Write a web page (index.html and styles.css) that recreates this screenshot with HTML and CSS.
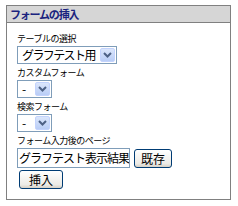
FILE: index.html
```html
<!DOCTYPE html>
<html lang="ja">
<head>
    <meta charset="UTF-8">
    <title>フォームの挿入</title>
    <link rel="stylesheet" href="styles.css">
</head>
<body>
    <div class="panel">
        <!-- Panel title -->
        <div class="panel-title">フォームの挿入</div>

        <div class="panel-body">
            <div class="field-label">テーブルの選択</div>
            <div class="select select-wide">
                <span class="select-value">グラフテスト用</span>
                <span class="select-arrow">
                    <svg width="9" height="6" viewBox="0 0 9 6"><path d="M1 1 L4.5 4.5 L8 1" fill="none" stroke="#4d6185" stroke-width="2"/></svg>
                </span>
            </div>

            <div class="field-label">カスタムフォーム</div>
            <div class="select">
                <span class="select-value">-</span>
                <span class="select-arrow">
                    <svg width="9" height="6" viewBox="0 0 9 6"><path d="M1 1 L4.5 4.5 L8 1" fill="none" stroke="#4d6185" stroke-width="2"/></svg>
                </span>
            </div>

            <div class="field-label">検索フォーム</div>
            <div class="select">
                <span class="select-value">-</span>
                <span class="select-arrow">
                    <svg width="9" height="6" viewBox="0 0 9 6"><path d="M1 1 L4.5 4.5 L8 1" fill="none" stroke="#4d6185" stroke-width="2"/></svg>
                </span>
            </div>

            <div class="field-label">フォーム入力後のページ</div>
            <div class="input-row">
                <div class="text-input">グラフテスト表示結果</div>
                <button class="btn btn-exist">既存</button>
            </div>
            <button class="btn btn-insert">挿入</button>
        </div>
    </div>
</body>
</html>
```

FILE: styles.css
```css
body {
    margin: 0;
    background: #ffffff;
    font-family: "Noto Sans CJK JP", "DejaVu Sans", sans-serif;
    color: #000000;
}

/* Outer panel */
.panel {
    margin: 5px 0 0 6px;
    width: 223px;
    height: 193px;
    border: 1px solid #808080;
}

.panel-title {
    height: 16px;
    line-height: 17px;
    background: #d6d6d6;
    border-bottom: 1px solid #808080;
    padding-left: 3px;
    font-size: 11px;
    font-weight: bold;
    letter-spacing: -1.2px;
    color: #1a237e;
}

.panel-body {
    padding: 10px 0 0 10px;
}

.field-label {
    font-size: 9px;
    line-height: 12px;
    height: 12px;
    letter-spacing: -0.5px;
    white-space: nowrap;
}

/* Fake XP style dropdown */
.select {
    display: flex;
    align-items: center;
    width: 35px;
    height: 18px;
    box-sizing: border-box;
    border: 1px solid #7f9db9;
    background: #ffffff;
    margin: 1px 0 3px;
}

.select-wide {
    width: 100px;
}

.select-value {
    flex: 1;
    font-size: 12px;
    line-height: 16px;
    letter-spacing: -1.6px;
    padding-left: 4px;
    white-space: nowrap;
    overflow: hidden;
}

.select-arrow {
    width: 15px;
    height: 14px;
    margin-right: 1px;
    display: flex;
    align-items: center;
    justify-content: center;
    background: linear-gradient(#dbe6fb, #b9cdf6);
    border: 1px solid #c3d3fd;
    box-sizing: border-box;
    border-radius: 2px;
}

.input-row {
    display: flex;
    align-items: center;
    gap: 4px;
    margin-top: 1px;
}

.text-input {
    width: 113px;
    height: 20px;
    box-sizing: border-box;
    line-height: 18px;
    border: 1px solid #7f9db9;
    font-size: 12px;
    letter-spacing: -1px;
    white-space: nowrap;
    overflow: hidden;
    padding-left: 1px;
}

.btn {
    font-family: "Noto Sans CJK JP", "DejaVu Sans", sans-serif;
    font-size: 12px;
    height: 19px;
    line-height: 15px;
    box-sizing: border-box;
    padding: 0;
    border: 1px solid #003c74;
    border-radius: 3px;
    background: linear-gradient(#ffffff, #ecebe6 80%, #d6d0c5);
    color: #000000;
}

.btn-exist {
    width: 38px;
}

.btn-insert {
    display: block;
    width: 44px;
    margin: 2px 0 0 2px;
}
```
